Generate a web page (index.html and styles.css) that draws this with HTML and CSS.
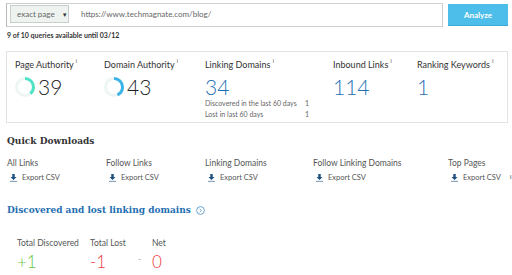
FILE: index.html
```html
<!DOCTYPE html>
<html lang="en">
<head>
    <meta charset="UTF-8">
    <meta name="viewport" content="width=device-width, initial-scale=1.0">
    <title>Link Explorer</title>
    <link rel="stylesheet" href="styles.css">
</head>
<body>
    <div class="page">
        <div class="search-row">
            <div class="search-box">
                <div class="mode-select">exact page <span class="caret">&#9660;</span></div>
                <span class="url">https://www.techmagnate.com/blog/</span>
            </div>
            <button class="analyze">Analyze</button>
        </div>
        <p class="quota">9 of 10 queries available until 03/12</p>

        <div class="metrics">
            <div class="metric">
                <div class="metric-label">Page Authority <sup>i</sup></div>
                <div class="metric-value">
                    <svg class="ring" width="20" height="20" viewBox="0 0 20 20">
                        <circle cx="10" cy="10" r="8.5" fill="none" stroke="#eef6f5" stroke-width="3"/>
                        <circle cx="10" cy="10" r="8.5" fill="none" stroke="#4fe3c6" stroke-width="3"
                                stroke-dasharray="20.8 53.4" transform="rotate(-90 10 10)"/>
                    </svg>
                    <span class="num">39</span>
                </div>
            </div>
            <div class="metric">
                <div class="metric-label">Domain Authority <sup>i</sup></div>
                <div class="metric-value">
                    <svg class="ring" width="20" height="20" viewBox="0 0 20 20">
                        <circle cx="10" cy="10" r="8.5" fill="none" stroke="#eef6f5" stroke-width="3"/>
                        <circle cx="10" cy="10" r="8.5" fill="none" stroke="#3db4e8" stroke-width="3"
                                stroke-dasharray="23 53.4" transform="rotate(-90 10 10)"/>
                    </svg>
                    <span class="num">43</span>
                </div>
            </div>
            <div class="metric">
                <div class="metric-label">Linking Domains <sup>i</sup></div>
                <div class="metric-value"><span class="num blue">34</span></div>
                <div class="sub-row"><span>Discovered in the last 60 days</span><span>1</span></div>
                <div class="sub-row"><span>Lost in last 60 days</span><span>1</span></div>
            </div>
            <div class="metric">
                <div class="metric-label">Inbound Links <sup>i</sup></div>
                <div class="metric-value"><span class="num blue">114</span></div>
            </div>
            <div class="metric">
                <div class="metric-label">Ranking Keywords <sup>i</sup></div>
                <div class="metric-value"><span class="num blue">1</span></div>
            </div>
        </div>

        <h2 class="section-title">Quick Downloads</h2>
        <div class="downloads">
            <div class="download">
                <div class="download-label">All Links</div>
                <a class="export"><svg class="dl-icon" width="7" height="8" viewBox="0 0 7 8"><path d="M2.3 0h2.4v3h1.8L3.5 6 0.5 3h1.8z" fill="#1d4f7f"/><rect x="0" y="6.8" width="7" height="1.2" fill="#8aa6c0"/></svg>Export CSV</a>
            </div>
            <div class="download">
                <div class="download-label">Follow Links</div>
                <a class="export"><svg class="dl-icon" width="7" height="8" viewBox="0 0 7 8"><path d="M2.3 0h2.4v3h1.8L3.5 6 0.5 3h1.8z" fill="#1d4f7f"/><rect x="0" y="6.8" width="7" height="1.2" fill="#8aa6c0"/></svg>Export CSV</a>
            </div>
            <div class="download">
                <div class="download-label">Linking Domains</div>
                <a class="export"><svg class="dl-icon" width="7" height="8" viewBox="0 0 7 8"><path d="M2.3 0h2.4v3h1.8L3.5 6 0.5 3h1.8z" fill="#1d4f7f"/><rect x="0" y="6.8" width="7" height="1.2" fill="#8aa6c0"/></svg>Export CSV</a>
            </div>
            <div class="download">
                <div class="download-label">Follow Linking Domains</div>
                <a class="export"><svg class="dl-icon" width="7" height="8" viewBox="0 0 7 8"><path d="M2.3 0h2.4v3h1.8L3.5 6 0.5 3h1.8z" fill="#1d4f7f"/><rect x="0" y="6.8" width="7" height="1.2" fill="#8aa6c0"/></svg>Export CSV</a>
            </div>
            <div class="download">
                <div class="download-label">Top Pages</div>
                <a class="export"><svg class="dl-icon" width="7" height="8" viewBox="0 0 7 8"><path d="M2.3 0h2.4v3h1.8L3.5 6 0.5 3h1.8z" fill="#1d4f7f"/><rect x="0" y="6.8" width="7" height="1.2" fill="#8aa6c0"/></svg>Export CSV<sup class="tip">i</sup></a>
            </div>
        </div>

        <h2 class="section-title blue">Discovered and lost linking domains
            <svg class="help" width="9" height="9" viewBox="0 0 9 9"><circle cx="4.5" cy="4.5" r="3.9" fill="none" stroke="#4a90c8" stroke-width="0.8"/><path d="M3.7 2.8l1.7 1.7-1.7 1.7" fill="none" stroke="#4a90c8" stroke-width="0.8"/></svg>
        </h2>
        <div class="totals">
            <div class="total-label">Total Discovered</div>
            <div class="total-label">Total Lost</div>
            <div></div>
            <div class="total-label">Net</div>
            <div class="total-value green">+1</div>
            <div class="total-value red">-1</div>
            <div class="equals">-</div>
            <div class="total-value red">0</div>
        </div>
    </div>
</body>
</html>
```

FILE: styles.css
```css
/* General */
body {
    margin: 0;
    background: #fff;
    font-family: Lato, "Liberation Sans", sans-serif;
    color: #333;
}

.page {
    padding: 3px 4px 0 6px;
}

/* Search bar */
.search-row {
    display: flex;
    align-items: flex-start;
    gap: 5px;
}

.search-box {
    box-sizing: border-box;
    width: 437px;
    height: 24px;
    border: 1px solid #cfcfcf;
    border-left-color: #b8b8b8;
    padding: 1px 3px;
    display: flex;
    align-items: flex-start;
    gap: 12px;
}

.mode-select {
    box-sizing: border-box;
    width: 59px;
    height: 18px;
    background: #eef3ef;
    border: 1px solid #c9d0cb;
    font-size: 8px;
    color: #666;
    display: flex;
    align-items: center;
    padding-left: 6px;
    gap: 7px;
}

.caret {
    font-size: 6px;
    color: #333;
}

.url {
    font-size: 8px;
    color: #666;
    line-height: 18px;
}

.analyze {
    margin-top: 1px;
    width: 60px;
    height: 22px;
    background: #4dbde9;
    border: none;
    border-bottom: 1px solid #3fa9d6;
    color: #fff;
    font-family: Lato, "Liberation Sans", sans-serif;
    font-size: 8px;
    font-weight: bold;
    padding: 0;
}

.quota {
    margin: 3px 0 0 1px;
    font-size: 7px;
    line-height: 10px;
    font-weight: bold;
    color: #333;
}

/* Metrics box */
.metrics {
    box-sizing: border-box;
    margin-top: 11px;
    height: 72px;
    border: 1px solid #e3e3e3;
    padding: 7px 0 0 8px;
    display: grid;
    grid-template-columns: 89px 101px 128px 84px auto;
}

.metric-label {
    font-size: 9px;
    line-height: 12px;
    color: #333;
}

sup {
    font-size: 5px;
    vertical-align: top;
    line-height: 6px;
    position: relative;
    top: -1px;
    color: #333;
}

.metric-value {
    margin-top: 5px;
    display: flex;
    align-items: center;
    gap: 3px;
    height: 22px;
}

.num {
    font-size: 21px;
    line-height: 22px;
    font-weight: 300;
    color: #222;
}

.num.blue {
    color: #1f6fb2;
}

.sub-row {
    display: flex;
    width: 104px;
    justify-content: space-between;
    font-size: 7px;
    line-height: 11px;
    color: #666;
}

/* Section titles */
.section-title {
    margin: 11px 0 0 1px;
    font-family: "DejaVu Serif", serif;
    font-size: 9px;
    line-height: 14px;
    font-weight: bold;
    color: #333;
}

.section-title.blue {
    margin-top: 20px;
    color: #1f6fb2;
    display: flex;
    align-items: center;
    gap: 5px;
}

/* Quick downloads */
.downloads {
    margin: 9px 0 0 1px;
    display: grid;
    grid-template-columns: 99px 99px 108px 135px auto;
}

.download-label {
    font-size: 8.5px;
    line-height: 12px;
    color: #555;
}

.export {
    margin-top: 4px;
    padding-left: 3px;
    display: flex;
    align-items: center;
    gap: 5px;
    font-size: 7.5px;
    line-height: 10px;
    color: #555;
    white-space: nowrap;
}

.tip {
    margin-left: 4px;
    color: #111;
    font-size: 6px;
}

/* Totals */
.totals {
    margin-top: 20px;
    padding-left: 11px;
    display: grid;
    grid-template-columns: 73px 48px 14px auto;
    row-gap: 4px;
}

.total-label {
    font-size: 8.5px;
    line-height: 12px;
    color: #555;
}

.total-value {
    font-size: 17px;
    line-height: 18px;
    font-weight: 300;
}

.green { color: #5fc83c; }
.red { color: #f0393f; }

.equals {
    font-size: 8px;
    color: #888;
    line-height: 12px;
}
```
